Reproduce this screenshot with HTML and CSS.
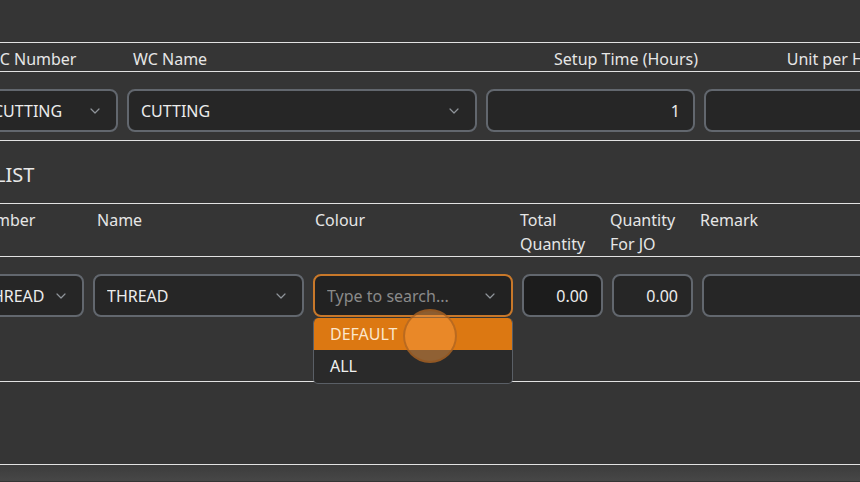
FILE: index.html
```html
<!DOCTYPE html>
<html lang="en">
<head>
<meta charset="utf-8">
<title>Work Centre</title>
<link rel="stylesheet" href="styles.css">
</head>
<body>
<div class="screen">
  <div class="top-space"></div>

  <section class="grid wc-grid">
    <div class="hd-row">
      <div class="hd">WC Number</div>
      <div class="hd">WC Name</div>
      <div class="hd hd--right">Setup Time (Hours)</div>
      <div class="hd hd--right hd--unit">Unit per Hour</div>
    </div>
    <div class="data-row">
      <div class="cell">
        <div class="field select"><span>CUTTING</span><svg class="chev" width="10" height="6" viewBox="0 0 10 6"><polyline points="1,1 5,5 9,1"/></svg></div>
      </div>
      <div class="cell">
        <div class="field select"><span>CUTTING</span><svg class="chev" width="10" height="6" viewBox="0 0 10 6"><polyline points="1,1 5,5 9,1"/></svg></div>
      </div>
      <div class="cell">
        <div class="field num">1</div>
      </div>
      <div class="cell">
        <div class="field num"></div>
      </div>
    </div>
  </section>

  <div class="section-title">LIST</div>

  <section class="grid item-grid">
    <div class="hd-row hd-row--tall">
      <div class="hd hd--wide">Number</div>
      <div class="hd hd--wide">Name</div>
      <div class="hd hd--mid">Colour</div>
      <div class="hd">Total Quantity</div>
      <div class="hd">Quantity For JO</div>
      <div class="hd">Remark</div>
    </div>
    <div class="data-row data-row--tall">
      <div class="cell">
        <div class="field select"><span>THREAD</span><svg class="chev" width="10" height="6" viewBox="0 0 10 6"><polyline points="1,1 5,5 9,1"/></svg></div>
      </div>
      <div class="cell">
        <div class="field select"><span>THREAD</span><svg class="chev" width="10" height="6" viewBox="0 0 10 6"><polyline points="1,1 5,5 9,1"/></svg></div>
      </div>
      <div class="cell">
        <div class="combo">
          <div class="field select select--focus"><span class="placeholder">Type to search...</span><svg class="chev" width="10" height="6" viewBox="0 0 10 6"><polyline points="1,1 5,5 9,1"/></svg></div>
          <ul class="menu">
            <li class="menu-item menu-item--active">DEFAULT</li>
            <li class="menu-item">ALL</li>
          </ul>
          <div class="cursor-dot"></div>
        </div>
      </div>
      <div class="cell">
        <div class="field num num--readonly">0.00</div>
      </div>
      <div class="cell">
        <div class="field num">0.00</div>
      </div>
      <div class="cell">
        <div class="field"></div>
      </div>
    </div>
  </section>

  <div class="empty-area"></div>
  <div class="footer"></div>
</div>
</body>
</html>
```

FILE: styles.css
```css
html, body {
  margin: 0;
  padding: 0;
  background: #353535;
  overflow: hidden;
}

body {
  font-family: "Noto Sans", "Open Sans", sans-serif;
  font-size: 16px;
  color: #e6e6e6;
  width: 860px;
  height: 482px;
}

.screen {
  width: 860px;
  height: 482px;
  overflow: hidden;
}

.top-space {
  height: 42px;
}

.grid {
  width: 1000px;
}

.wc-grid {
  margin-left: -26px;
}

.item-grid {
  margin-left: -36px;
}

.hd-row,
.data-row {
  display: grid;
}

.wc-grid .hd-row,
.wc-grid .data-row {
  grid-template-columns: 148px 359px 218px 192px;
}

.item-grid .hd-row,
.item-grid .data-row {
  grid-template-columns: 124px 220px 209px 90px 90px 240px;
}

.hd-row {
  border-top: 1px solid #e2e2e2;
  border-bottom: 1px solid #e2e2e2;
  box-sizing: content-box;
  line-height: 24px;
  padding-top: 4px;
  height: 24px;
}

.hd-row--tall {
  padding-top: 4px;
  height: 48px;
}

.hd {
  padding: 0 2px 0 3px;
}

.wc-grid .hd {
  padding-left: 11px;
}

.hd--right {
  text-align: right;
}

.wc-grid .hd--right {
  padding-left: 0;
  padding-right: 1px;
}

.hd--unit {
  white-space: nowrap;
}

.hd--wide {
  padding-left: 9px;
}

.hd--mid {
  padding-left: 7px;
}

.data-row {
  border-bottom: 1px solid #e2e2e2;
  padding: 17px 0 8px;
}

.data-row--tall {
  padding-bottom: 64px;
}

.cell {
  padding: 0 4px 0 5px;
  min-width: 0;
}

.field {
  box-sizing: border-box;
  height: 43px;
  border: 2px solid #62676e;
  border-radius: 8px;
  background: #262626;
  display: flex;
  align-items: center;
  padding: 0 13px 0 12px;
  color: #ececec;
  white-space: nowrap;
  overflow: hidden;
}

.select {
  justify-content: space-between;
  padding-right: 16px;
}

.select span {
  overflow: hidden;
}

.chev {
  flex: none;
  fill: none;
  stroke: #8f949a;
  stroke-width: 1.2;
  stroke-linecap: round;
  stroke-linejoin: round;
}

.num {
  justify-content: flex-end;
}

.num--readonly {
  background: #1c1c1c;
}

.select--focus {
  border-color: #c8782a;
  background: #222222;
}

.placeholder {
  color: #8a8a8a;
}

.combo {
  position: relative;
}

.menu {
  position: absolute;
  left: 0;
  right: 0;
  top: 44px;
  margin: 0;
  padding: 0;
  list-style: none;
  background: #2a2a2a;
  border: 1px solid #5a5f66;
  border-top: none;
  border-radius: 5px;
  overflow: hidden;
  z-index: 2;
}

.menu-item {
  height: 32px;
  line-height: 32px;
  padding-left: 16px;
  color: #f0f0f0;
}

.menu-item + .menu-item {
  height: 33px;
}

.menu-item--active {
  background: #dc7812;
  color: #fbe6cc;
  border-radius: 4px 4px 0 0;
}

.cursor-dot {
  position: absolute;
  left: 90px;
  top: 35px;
  width: 50px;
  height: 50px;
  border-radius: 50%;
  background: rgba(246, 152, 62, 0.5);
  border: 2px solid rgba(150, 82, 24, 0.55);
  z-index: 3;
}

.section-title {
  height: 62px;
  box-sizing: border-box;
  padding-top: 20px;
  margin-left: -5px;
  font-size: 20px;
  line-height: 28px;
  color: #e8e8e8;
}

.empty-area {
  height: 82px;
  border-bottom: 1px solid #e2e2e2;
}

.footer {
  height: 16px;
  background: linear-gradient(#3c3c3c, #474747);
}
```
